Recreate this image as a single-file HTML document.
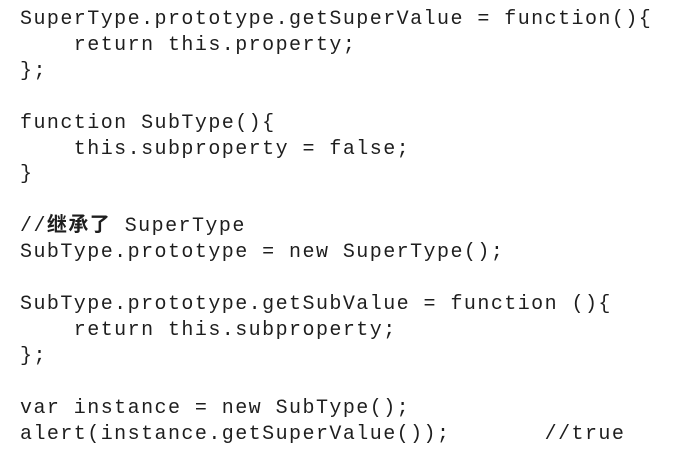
<!DOCTYPE html>
<html><head><meta charset="utf-8"><style>
html,body{margin:0;padding:0;background:#fff;width:679px;height:457px;overflow:hidden}
pre{position:absolute;left:20px;top:7px;margin:0;font-family:"Liberation Mono","Noto Sans CJK SC",monospace;font-size:20px;letter-spacing:1.45px;line-height:25.9px;color:#1e1e1e}
b{font-weight:bold}
</style></head><body>
<pre>SuperType.prototype.getSuperValue = function(){
    return this.property;
};

function SubType(){
    this.subproperty = false;
}

//<b>继承了</b> SuperType
SubType.prototype = new SuperType();

SubType.prototype.getSubValue = function (){
    return this.subproperty;
};

var instance = new SubType();
alert(instance.getSuperValue());       //true</pre>
</body></html>
